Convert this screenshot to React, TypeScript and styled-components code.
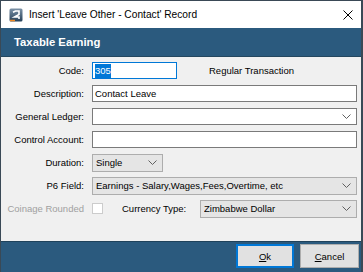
import React from "react";
import styled, { createGlobalStyle } from "styled-components";

const Global = createGlobalStyle`
  html, body { margin: 0; padding: 0; background: #2f3e4a; }
  body { width: 363px; height: 272px; overflow: hidden; }
`;

const BLUE = "#2b5a7e";
const UI_FONT = `"Liberation Sans", Arial, sans-serif`;

const Window = styled.div`
  width: 363px;
  height: 272px;
  box-sizing: border-box;
  border-top: 1px solid #3a4956;
  border-left: 1px solid #3a4956;
  border-right: 2px solid #3a4956;
  display: flex;
  flex-direction: column;
  overflow: hidden;
  font-family: ${UI_FONT};
`;

const TitleBar = styled.div`
  height: 27px;
  flex: none;
  background: #ffffff;
  display: flex;
  align-items: center;
  padding-left: 8px;
  gap: 6px;
`;

const TitleText = styled.span`
  font-size: 10.2px;
  color: #000;
  flex: 1;
  white-space: nowrap;
`;

const CloseBox = styled.div`
  width: 26px;
  height: 27px;
  display: flex;
  align-items: center;
  justify-content: center;
`;

const Header = styled.div`
  height: 29px;
  flex: none;
  background: ${BLUE};
  border-bottom: 1px solid #24475f;
  box-sizing: border-box;
  display: flex;
  align-items: center;
  padding-left: 13px;
  color: #fff;
  font-weight: bold;
  font-size: 11.3px;
`;

const Form = styled.div`
  flex: 1;
  background: #f0f0f0;
  padding: 2px 4px 0 0;
  display: grid;
  grid-template-columns: 83px 1fr;
  column-gap: 8px;
  grid-auto-rows: 23px;
  align-content: start;
  font-size: 9.5px;
`;

const Label = styled.div<{ $disabled?: boolean }>`
  display: flex;
  align-items: center;
  justify-content: flex-end;
  color: ${(p) => (p.$disabled ? "#a0a0a0" : "#000")};
  white-space: nowrap;
`;

const Cell = styled.div`
  display: flex;
  align-items: center;
  min-width: 0;
`;

const TextBox = styled.div<{ $w?: number; $focused?: boolean }>`
  box-sizing: border-box;
  height: 17px;
  width: ${(p) => (p.$w ? `${p.$w}px` : "100%")};
  flex: ${(p) => (p.$w ? "none" : "1")};
  background: #fff;
  border: 1px solid ${(p) => (p.$focused ? "#0078d7" : "#7a7a7a")};
  display: flex;
  align-items: center;
  padding-left: 2px;
  color: #000;
  white-space: nowrap;
`;

const Selected = styled.span`
  background: #0078d7;
  color: #fff;
  padding: 1px 0;
  line-height: 12px;
`;

const Combo = styled.div<{ $w?: number; $list?: boolean }>`
  box-sizing: border-box;
  height: ${(p) => (p.$list ? "18px" : "17px")};
  width: ${(p) => (p.$w ? `${p.$w}px` : "100%")};
  flex: ${(p) => (p.$w ? "none" : "1")};
  background: ${(p) => (p.$list ? "#e5e5e5" : "#fff")};
  border: 1px solid ${(p) => (p.$list ? "#adadad" : "#7a7a7a")};
  display: flex;
  align-items: center;
  padding: 0 5px 0 3px;
  color: #000;
  white-space: nowrap;
`;

const ComboText = styled.span`
  flex: 1;
  overflow: hidden;
`;

const Note = styled.span`
  margin-left: 32px;
  color: #000;
  white-space: nowrap;
`;

const CheckBox = styled.div`
  box-sizing: border-box;
  width: 11px;
  height: 11px;
  border: 1px solid #cccccc;
  background: #fff;
  flex: none;
`;

const InlineLabel = styled.span`
  width: 78px;
  margin-left: 19px;
  flex: none;
  color: #000;
  white-space: nowrap;
`;

const Footer = styled.div`
  height: 31px;
  flex: none;
  box-sizing: border-box;
  background: ${BLUE};
  border-top: 1px solid #1f425b;
  display: flex;
  justify-content: flex-end;
  align-items: flex-start;
  gap: 6px;
  padding: 2px 2px 0 0;
`;

const Button = styled.div<{ $default?: boolean; $w: number }>`
  box-sizing: border-box;
  width: ${(p) => p.$w}px;
  height: 24px;
  background: #e1e1e1;
  border: ${(p) => (p.$default ? "2px solid #0078d7" : "1px solid #adadad")};
  display: flex;
  align-items: center;
  justify-content: center;
  font-size: 9.5px;
  color: #000;
  u { text-decoration: underline; text-underline-offset: 1px; }
`;

const Chevron = () => (
  <svg width="9" height="5" viewBox="0 0 9 5" style={{ flex: "none" }}>
    <polyline points="0.5,0.5 4.5,4.5 8.5,0.5" fill="none" stroke="#606060" strokeWidth="1" />
  </svg>
);

const AppIcon = () => (
  <svg width="14" height="14" viewBox="0 0 14 14">
    <defs>
      <linearGradient id="ig" x1="0" y1="0" x2="0" y2="1">
        <stop offset="0" stopColor="#7d93a8" />
        <stop offset="1" stopColor="#253f57" />
      </linearGradient>
    </defs>
    <rect x="0.5" y="0.5" width="13" height="13" rx="1.5" fill="url(#ig)" />
    <path d="M4 4.2 L6.5 3 H10 V6.5 L5.5 9 H10 V11" fill="none" stroke="#ffffff" strokeWidth="1.6" />
    <path d="M1 12.5 H6" stroke="#f08a24" strokeWidth="1.5" />
  </svg>
);

const CloseIcon = () => (
  <svg width="10" height="10" viewBox="0 0 10 10">
    <path d="M0.5 0.5 L9.5 9.5 M9.5 0.5 L0.5 9.5" stroke="#000" strokeWidth="1" />
  </svg>
);

export default function App() {
  return (
    <>
      <Global />
      <Window>
        <TitleBar>
          <AppIcon />
          <TitleText>Insert 'Leave Other - Contact' Record</TitleText>
          <CloseBox>
            <CloseIcon />
          </CloseBox>
        </TitleBar>
        <Header>Taxable Earning</Header>
        <Form>
          <Label>Code:</Label>
          <Cell>
            <TextBox $w={85} $focused>
              <Selected>305</Selected>
            </TextBox>
            <Note>Regular Transaction</Note>
          </Cell>

          <Label>Description:</Label>
          <Cell>
            <TextBox>Contact Leave</TextBox>
          </Cell>

          <Label>General Ledger:</Label>
          <Cell>
            <Combo>
              <ComboText />
              <Chevron />
            </Combo>
          </Cell>

          <Label>Control Account:</Label>
          <Cell>
            <TextBox />
          </Cell>

          <Label>Duration:</Label>
          <Cell>
            <Combo $list $w={71}>
              <ComboText>Single</ComboText>
              <Chevron />
            </Combo>
          </Cell>

          <Label>P6 Field:</Label>
          <Cell>
            <Combo $list>
              <ComboText>Earnings - Salary,Wages,Fees,Overtime, etc</ComboText>
              <Chevron />
            </Combo>
          </Cell>

          <Label $disabled>Coinage Rounded</Label>
          <Cell>
            <CheckBox />
            <InlineLabel>Currency Type:</InlineLabel>
            <Combo $list>
              <ComboText>Zimbabwe Dollar</ComboText>
              <Chevron />
            </Combo>
          </Cell>
        </Form>
        <Footer>
          <Button $default $w={58}>
            <span>
              <u>O</u>k
            </span>
          </Button>
          <Button $w={59}>
            <span>
              <u>C</u>ancel
            </span>
          </Button>
        </Footer>
      </Window>
    </>
  );
}
